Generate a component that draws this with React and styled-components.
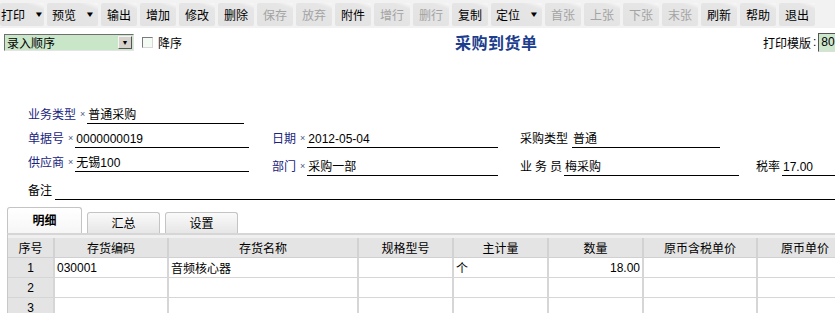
import React from 'react';
import styled, { createGlobalStyle } from 'styled-components';

const GlobalStyle = createGlobalStyle`
  html, body {
    margin: 0;
    padding: 0;
    overflow: hidden;
    background: #ffffff;
  }
  body {
    font-family: "Liberation Sans", "Noto Sans CJK SC", sans-serif;
    font-size: 12px;
    color: #000;
  }
`;

const Page = styled.div`
  width: 900px;
  height: 313px;
  overflow: hidden;
`;

const Toolbar = styled.div`
  display: flex;
  gap: 3px;
  height: 28px;
  align-items: center;
  padding: 0 1px 0 0;
  background: #f2f2f2;
`;

const ToolButton = styled.div`
  display: flex;
  align-items: center;
  justify-content: ${(p) => (p.$menu ? 'flex-start' : 'center')};
  gap: 10px;
  height: 23px;
  width: ${(p) => (p.$menu ? '51px' : '36px')};
  padding-left: ${(p) => (p.$menu ? '5px' : '0')};
  box-sizing: border-box;
  border-radius: 2px;
  background: linear-gradient(200deg, #fbfbfb 0%, #e6e6e6 18%, #e2e2e2 100%);
  color: ${(p) => (p.$disabled ? '#a3a3a3' : '#000')};
  font-size: 12px;
  white-space: nowrap;
  &:first-child {
    width: 44px;
    padding-left: 1px;
  }
`;

const Caret = styled.span`
  font-size: 8px;
  transform: scaleX(1.3);
`;

const HeadRow = styled.div`
  display: grid;
  grid-template-columns: 451px 308px 1fr;
  align-items: center;
  height: 28px;
  padding-left: 4px;
`;

const SortGroup = styled.div`
  display: flex;
  align-items: center;
`;

const SortSelect = styled.div`
  display: flex;
  align-items: center;
  justify-content: space-between;
  width: 130px;
  height: 17px;
  box-sizing: border-box;
  border: 1px solid;
  border-color: #6e6e6e #e4e4e4 #e4e4e4 #6e6e6e;
  background: #c9e6c9;
  padding-left: 2px;
  font-size: 12px;
`;

const SelectArrow = styled.div`
  width: 14px;
  height: 13px;
  margin-right: 1px;
  box-sizing: border-box;
  background: #d6d3cc;
  border: 1px solid;
  border-color: #f4f4f4 #555 #555 #f4f4f4;
  display: flex;
  align-items: center;
  justify-content: center;
  font-size: 7px;
`;

const CheckBox = styled.div`
  width: 11px;
  height: 11px;
  margin-left: 8px;
  box-sizing: border-box;
  border: 1px solid;
  border-color: #7a7a7a #d8d8d8 #d8d8d8 #7a7a7a;
  background: #f4fbf4;
`;

const CheckLabel = styled.span`
  margin-left: 5px;
  font-size: 12px;
`;

const Title = styled.h1`
  margin: 0;
  font-size: 16px;
  font-weight: bold;
  color: #1d3d8e;
  letter-spacing: 0.5px;
  font-family: "Noto Sans CJK SC", sans-serif;
`;

const PrintGroup = styled.div`
  display: flex;
  align-items: center;
  font-size: 12px;
`;

const Colon = styled.span`
  margin-left: 2px;
`;

const PrintInput = styled.div`
  width: 60px;
  height: 19px;
  margin-left: 2px;
  box-sizing: border-box;
  border: 1px solid;
  border-color: #555 #ddd #ddd #555;
  background: #cde7cd;
  padding-left: 2px;
  line-height: 17px;
`;

const Form = styled.div`
  display: flex;
  flex-direction: column;
  gap: 4px;
  padding: 48px 0 0 28px;
`;

const FormRow = styled.div`
  display: ${(p) => (p.$line ? 'flex' : 'grid')};
  align-items: ${(p) => (p.$line ? 'flex-end' : 'start')};
  grid-template-columns: 244px 248px 236px 1fr;
  min-height: 20px;
`;

const Field = styled.div`
  display: flex;
  align-items: flex-end;
  height: 20px;
  margin-top: ${(p) => (p.$drop ? 4 : 0)}px;
`;

const Label = styled.span`
  color: ${(p) => (p.$plain ? '#000' : '#1a237e')};
  white-space: nowrap;
  line-height: 16px;
  padding-bottom: 1px;
  letter-spacing: ${(p) => (p.$spaced ? '3px' : '0')};
`;

const Star = styled.span`
  font-size: 9px;
  line-height: 9px;
  color: #4a5a8a;
  margin: 0 2px 0 4px;
  padding-bottom: 5px;
`;

const Value = styled.div`
  width: ${(p) => p.$w}px;
  margin-left: ${(p) => p.$ml || 0}px;
  height: 16px;
  padding-top: 3px;
  line-height: 16px;
  border-bottom: 1px solid #000;
  padding-left: 1px;
  white-space: nowrap;
  box-sizing: content-box;
`;

const Tabs = styled.div`
  display: flex;
  align-items: flex-end;
  gap: 5px;
  margin: 7px 0 0 7px;
  height: 26px;
`;

const Tab = styled.div`
  width: ${(p) => (p.$active ? 75 : 73)}px;
  height: ${(p) => (p.$active ? 26 : 21)}px;
  box-sizing: border-box;
  border: 1px solid #c4c4c4;
  border-bottom: none;
  border-radius: 3px 3px 0 0;
  background: ${(p) =>
    p.$active
      ? 'linear-gradient(#ffffff, #f6f6f6)'
      : 'linear-gradient(#fafafa, #e6e6e6)'};
  display: flex;
  justify-content: center;
  align-items: ${(p) => (p.$active ? 'flex-start' : 'flex-end')};
  padding: ${(p) => (p.$active ? '3px 0 0' : '0 0 2px')};
  font-weight: ${(p) => (p.$active ? 'bold' : 'normal')};
  font-size: 12px;
`;

const Panel = styled.div`
  margin-left: 7px;
  border-top: 2px solid #d6d6d6;
  border-left: 1px solid #c8c8c8;
  padding-top: 3px;
  background: #f0f0f0;
`;

const Grid = styled.table`
  border-collapse: collapse;
  table-layout: fixed;
  background: #fff;
  font-size: 12px;
`;

const Th = styled.th`
  width: ${(p) => p.$w}px;
  height: 19px;
  padding: 0;
  font-weight: normal;
  background: #e4e4e4;
  border-right: 2px solid #d2d2d2;
  border-bottom: 1px solid #d0d0d0;
  text-align: center;
`;

const Td = styled.td`
  height: 19px;
  padding: 0 2px;
  border-right: 2px solid #d6d6d6;
  border-bottom: 1px solid #d6d6d6;
  text-align: ${(p) => p.$align || 'left'};
  background: ${(p) => (p.$index ? '#e4e4e4' : '#fff')};
  white-space: nowrap;
`;

const buttons = [
  { t: '打印', menu: true },
  { t: '预览', menu: true },
  { t: '输出' },
  { t: '增加' },
  { t: '修改' },
  { t: '删除' },
  { t: '保存', off: true },
  { t: '放弃', off: true },
  { t: '附件' },
  { t: '增行', off: true },
  { t: '删行', off: true },
  { t: '复制' },
  { t: '定位', menu: true },
  { t: '首张', off: true },
  { t: '上张', off: true },
  { t: '下张', off: true },
  { t: '末张', off: true },
  { t: '刷新' },
  { t: '帮助' },
  { t: '退出' },
];

const columns = [
  ['序号', 45],
  ['存货编码', 112],
  ['存货名称', 188],
  ['规格型号', 93],
  ['主计量', 93],
  ['数量', 93],
  ['原币含税单价', 112],
  ['原币单价', 94],
];

const rows = [
  ['1', '030001', '音频核心器', '', '个', '18.00', '', ''],
  ['2', '', '', '', '', '', '', ''],
  ['3', '', '', '', '', '', '', ''],
];

export default function App() {
  return (
    <Page>
      <GlobalStyle />
      <Toolbar>
        {buttons.map((b) => (
          <ToolButton key={b.t} $menu={b.menu} $disabled={b.off}>
            <span>{b.t}</span>
            {b.menu && <Caret>▼</Caret>}
          </ToolButton>
        ))}
      </Toolbar>

      <HeadRow>
        <SortGroup>
          <SortSelect>
            <span>录入顺序</span>
            <SelectArrow>▼</SelectArrow>
          </SortSelect>
          <CheckBox />
          <CheckLabel>降序</CheckLabel>
        </SortGroup>
        <Title>采购到货单</Title>
        <PrintGroup>
          <span>打印模版</span>
          <Colon>:</Colon>
          <PrintInput>8011</PrintInput>
        </PrintGroup>
      </HeadRow>

      <Form>
        <FormRow>
          <Field>
            <Label>业务类型</Label>
            <Star>×</Star>
            <Value $w={156}>普通采购</Value>
          </Field>
        </FormRow>
        <FormRow>
          <Field>
            <Label>单据号</Label>
            <Star>×</Star>
            <Value $w={173}>0000000019</Value>
          </Field>
          <Field>
            <Label>日期</Label>
            <Star>×</Star>
            <Value $w={190}>2012-05-04</Value>
          </Field>
          <Field>
            <Label $plain>采购类型</Label>
            <Value $w={147} $ml={4}>普通</Value>
          </Field>
        </FormRow>
        <FormRow>
          <Field>
            <Label>供应商</Label>
            <Star>×</Star>
            <Value $w={173}>无锡100</Value>
          </Field>
          <Field $drop>
            <Label>部门</Label>
            <Star>×</Star>
            <Value $w={190}>采购一部</Value>
          </Field>
          <Field $drop>
            <Label $plain $spaced>业务员</Label>
            <Value $w={174} $ml={-1}>梅采购</Value>
          </Field>
          <Field $drop>
            <Label $plain>税率</Label>
            <Value $w={120} $ml={2}>17.00</Value>
          </Field>
        </FormRow>
        <FormRow $line>
          <Label $plain>备注</Label>
          <Value $w={840} $ml={3} />
        </FormRow>
      </Form>

      <Tabs>
        <Tab $active>明细</Tab>
        <Tab>汇总</Tab>
        <Tab>设置</Tab>
      </Tabs>
      <Panel>
        <Grid>
          <thead>
            <tr>
              {columns.map(([name, w]) => (
                <Th key={name} $w={w}>
                  {name}
                </Th>
              ))}
            </tr>
          </thead>
          <tbody>
            {rows.map((r) => (
              <tr key={r[0]}>
                {r.map((c, i) => (
                  <Td
                    key={i}
                    $index={i === 0}
                    $align={i === 0 ? 'center' : i === 5 ? 'right' : 'left'}
                  >
                    {c}
                  </Td>
                ))}
              </tr>
            ))}
          </tbody>
        </Grid>
      </Panel>
    </Page>
  );
}
